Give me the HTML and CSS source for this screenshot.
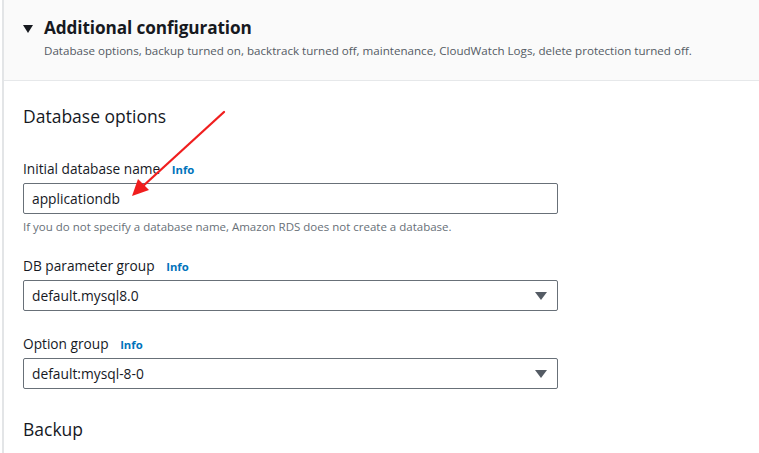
FILE: index.html
```html
<!DOCTYPE html>
<html>
<head>
<meta charset="utf-8">
<link rel="stylesheet" href="styles.css">
</head>
<body>
<div class="panel">
  <div class="header">
    <div class="title-row">
      <svg class="caret" width="10" height="8" viewBox="0 0 10 8"><path d="M0 0 H10 L5 8 Z" fill="#16191f"/></svg>
      <h2 class="title">Additional configuration</h2>
    </div>
    <p class="desc">Database options, backup turned on, backtrack turned off, maintenance, CloudWatch Logs, delete protection turned off.</p>
  </div>
  <div class="body">
    <h3 class="section">Database options</h3>
    <div class="field first">
      <div class="label">Initial database name <span class="info">Info</span></div>
      <div class="input">applicationdb</div>
      <div class="hint">If you do not specify a database name, Amazon RDS does not create a database.</div>
    </div>
    <div class="field second">
      <div class="label">DB parameter group <span class="info">Info</span></div>
      <div class="input select">default.mysql8.0<svg class="drop" width="12" height="8" viewBox="0 0 12 8"><path d="M0 0 H12 L6 8 Z" fill="#545b64"/></svg></div>
    </div>
    <div class="field third">
      <div class="label">Option group <span class="info">Info</span></div>
      <div class="input select">default:mysql-8-0<svg class="drop" width="12" height="8" viewBox="0 0 12 8"><path d="M0 0 H12 L6 8 Z" fill="#545b64"/></svg></div>
    </div>
    <h3 class="section backup">Backup</h3>
  </div>
  <svg class="arrow" width="120" height="110" viewBox="0 0 120 110">
    <line x1="102" y1="2" x2="20" y2="77" stroke="#f01e1e" stroke-width="2.3" stroke-linecap="round"/>
    <path d="M10 86 L16 69 L27 80 Z" fill="#f01e1e"/>
  </svg>
</div>
</body>
</html>
```
FILE: styles.css
```css
* { box-sizing: border-box; }
html, body { margin: 0; padding: 0; background: #fff; }
body {
  font-family: "Open Sans", "Noto Sans", sans-serif;
  color: #16191f;
  width: 759px;
  height: 453px;
  overflow: hidden;
}
.panel {
  position: relative;
  margin-left: 2px;
  border-left: 2px solid #e3e5e7;
  min-height: 453px;
}
.header {
  background: #fafafa;
  height: 81px;
  border-bottom: 1px solid #e6e8ea;
  padding: 15px 0 0 19px;
}
.title-row {
  display: flex;
  align-items: center;
  gap: 11px;
}
.caret { margin-top: 1px; }
.title {
  margin: 0;
  font-size: 17.2px;
  font-weight: 700;
  line-height: 26px;
  letter-spacing: -0.1px;
}
.desc {
  margin: 2px 0 0 21px;
  font-size: 11.6px;
  line-height: 16px;
  color: #545b64;
}
.body {
  padding: 22px 0 0 19px;
}
.section {
  margin: 0;
  font-size: 17.5px;
  font-weight: 400;
  line-height: 26px;
}
.field { width: 535px; }
.field.first { margin-top: 30px; }
.field.second { margin-top: 21px; }
.field.third { margin-top: 23px; }
.label {
  font-size: 13.7px;
  line-height: 20px;
  margin-bottom: 3px;
}
.info {
  color: #0073bb;
  font-weight: 700;
  font-size: 11.3px;
  margin-left: 8px;
}
.input {
  height: 31px;
  border: 1px solid #687078;
  border-radius: 2px;
  padding: 0 0 0 8px;
  font-size: 13.8px;
  display: flex;
  align-items: center;
  justify-content: space-between;
}
.select { padding-right: 10px; }
.hint {
  font-size: 11.5px;
  color: #687078;
  line-height: 16px;
  margin-top: 5px;
}
.backup { margin-top: 27px; }
.arrow {
  position: absolute;
  left: 118px;
  top: 110px;
}
```
